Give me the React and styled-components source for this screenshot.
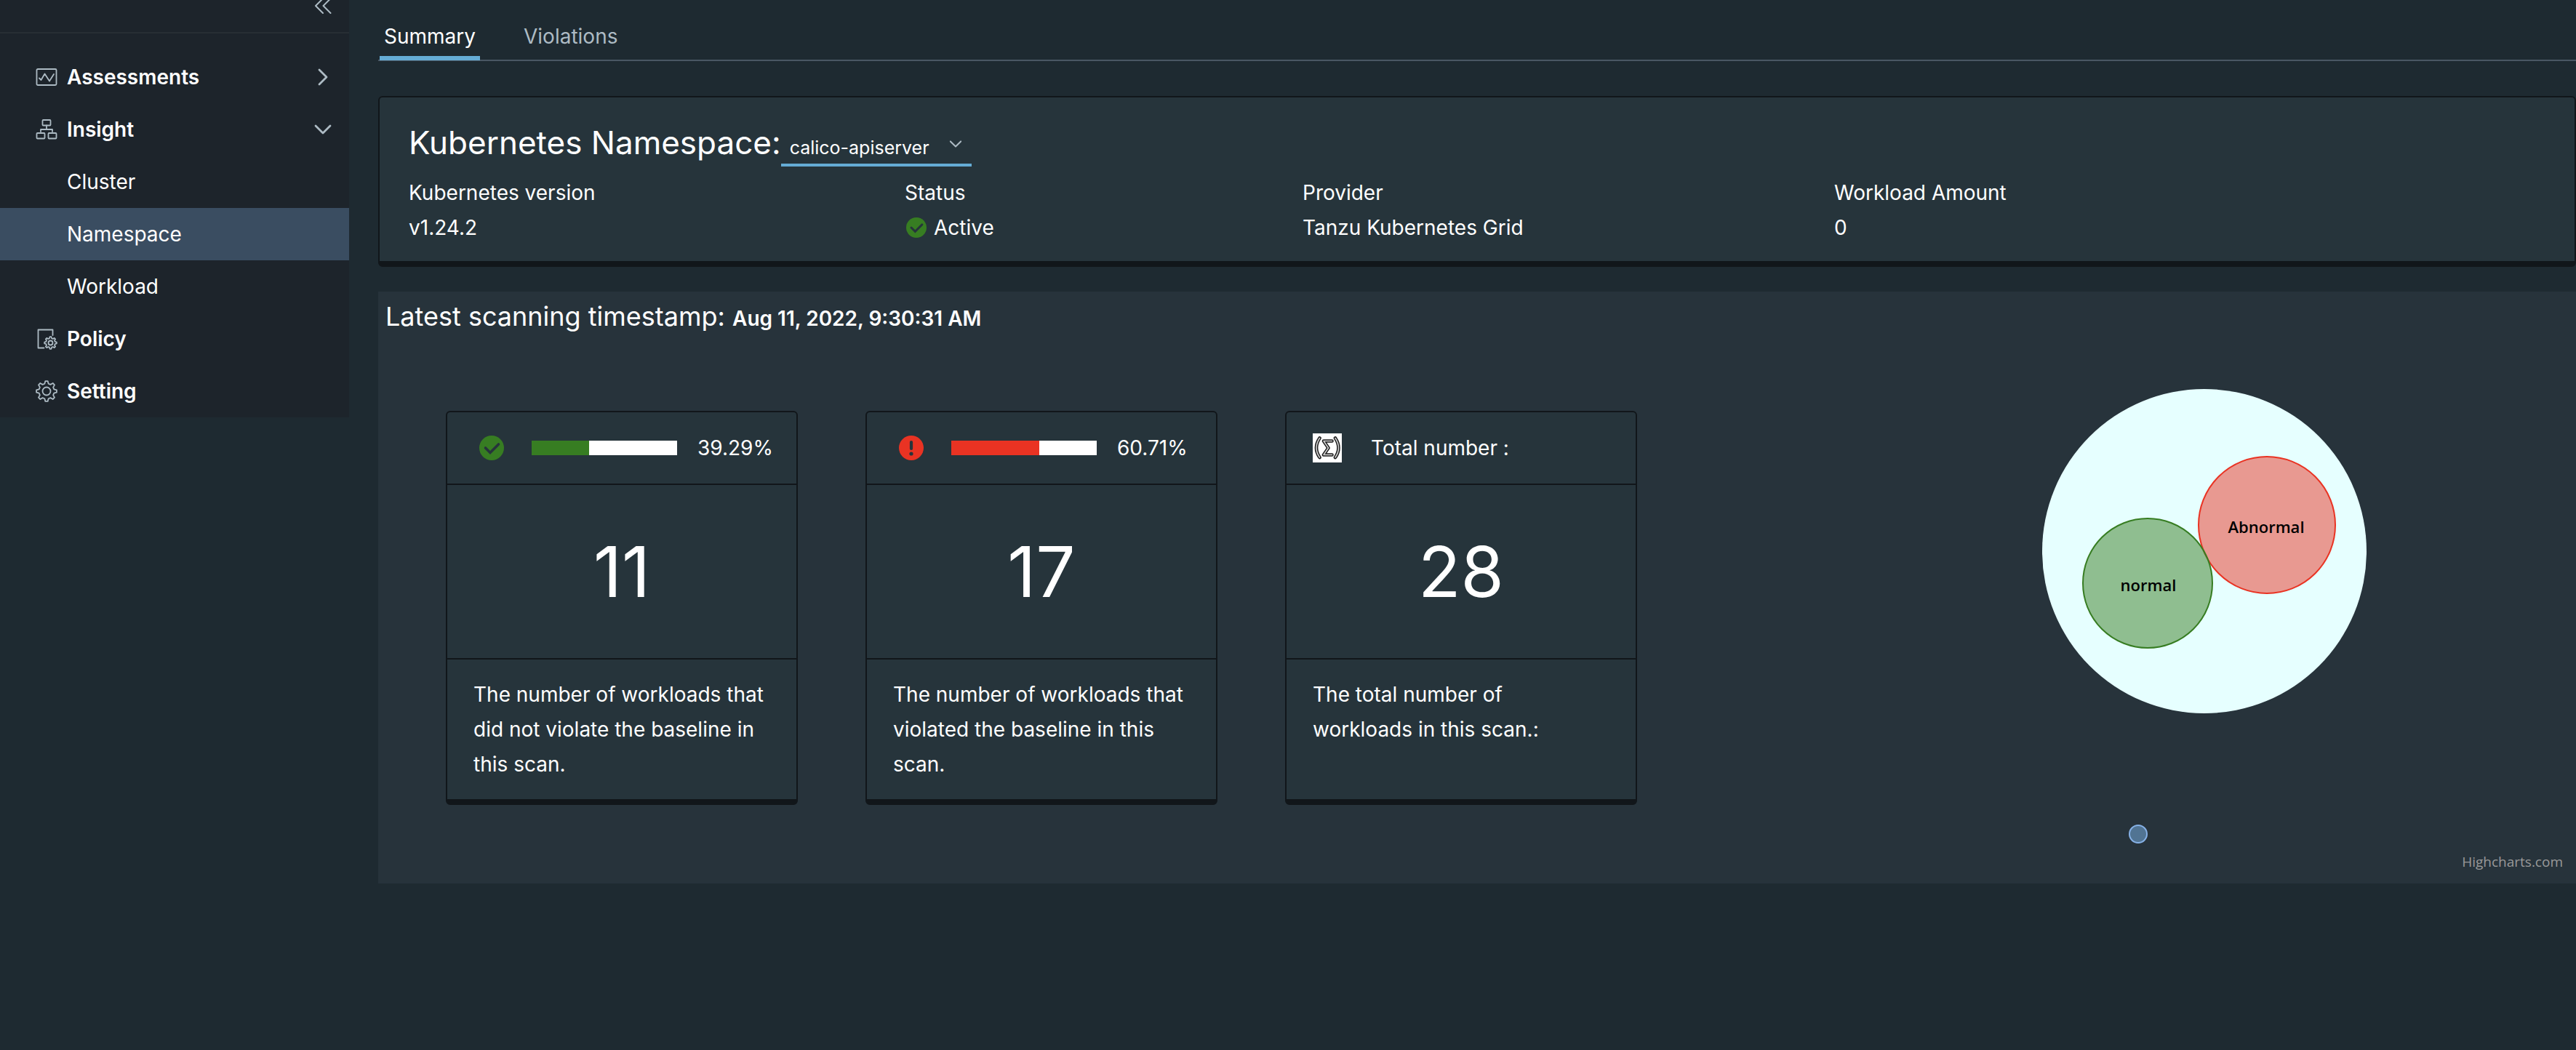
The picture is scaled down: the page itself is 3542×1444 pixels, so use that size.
import React from "react";
import styled, { createGlobalStyle } from "styled-components";

const color = {
  page: "#1e2a31",
  side: "#1d242b",
  sideLine: "#272e34",
  selected: "#3a4d61",
  card: "#26343b",
  panel: "#27333b",
  edge: "#11161a",
  accent: "#65acd5",
  muted: "#adbbc4",
  rule: "#4a5763",
  good: "#377d22",
  bad: "#e93323",
};

const GlobalStyle = createGlobalStyle`
  *, *::before, *::after { box-sizing: border-box; }
  body {
    margin: 0;
    background: ${color.page};
    color: #fff;
    font-family: Inter, "Open Sans", sans-serif;
    font-size: 28px;
    line-height: 48px;
  }
  h1, h2, p, ul, dl, dd { margin: 0; padding: 0; font-weight: 400; }
  ul { list-style: none; }
  a { color: inherit; text-decoration: none; }
  button, select { font: inherit; color: inherit; background: none; border: 0; padding: 0; border-radius: 0; }
  svg { display: block; flex: none; }
`;

const Shell = styled.div`
  display: flex;
  align-items: flex-start;
  min-height: 100vh;
`;

const SideNav = styled.nav`
  flex: 0 0 480px;
  background: ${color.side};
`;

const CollapseBar = styled.div`
  display: flex;
  justify-content: flex-end;
  height: 46px;
  padding-right: 22px;
  margin-bottom: 24px;
  border-bottom: 2px solid ${color.sideLine};
`;

const CollapseButton = styled.button`
  height: 20px;
  color: ${color.muted};
`;

const NavLink = styled.a`
  display: flex;
  align-items: center;
  height: 72px;
  padding: 0 22px 0 ${(p) => (p.$child ? "92px" : "48px")};
  font-weight: ${(p) => (p.$child ? 400 : 600)};
  background: ${(p) => (p.$selected ? color.selected : "transparent")};
  svg { color: ${color.muted}; }
`;

const NavText = styled.span`
  flex: 1;
  padding-left: ${(p) => (p.$indent ? "12px" : "0")};
`;

const Main = styled.main`
  flex: 1;
  min-width: 0;
  padding-left: 40px;
`;

const TabBar = styled.div`
  display: flex;
  gap: 54px;
  height: 84px;
  border-bottom: 2px solid ${color.rule};
  padding-left: 2px;
`;

const Tab = styled.button`
  height: 83px;
  padding: 22px 6px 0;
  color: ${(p) => (p.$active ? "#fff" : color.muted)};
  border-bottom: 6px solid ${(p) => (p.$active ? color.accent : "transparent")};
`;

const InfoCard = styled.section`
  margin-top: 48px;
  padding: 32px 40px 22px;
  background: ${color.card};
  border: 2px solid ${color.edge};
  border-bottom-width: 8px;
  border-radius: 6px;
`;

const TitleRow = styled.div`
  display: flex;
  align-items: baseline;
`;

const Title = styled.h1`
  font-size: 44px;
  line-height: 60px;
`;

const Picker = styled.label`
  display: grid;
  align-items: center;
  width: 262px;
  border-bottom: 4px solid ${color.accent};
  select {
    grid-area: 1 / 1;
    appearance: none;
    padding: 0 50px 0 12px;
    height: 44px;
    font-size: 25px;
    line-height: 44px;
  }
  svg {
    grid-area: 1 / 1;
    justify-self: end;
    margin: 0 12px 10px 0;
    pointer-events: none;
    color: ${color.muted};
  }
`;

const Facts = styled.dl`
  display: grid;
  grid-template-columns: 682fr 547fr 731fr 978fr;
  padding-top: 12px;
`;

const FactValue = styled.dd`
  display: flex;
  align-items: center;
  gap: 10px;
  svg { margin-left: 2px; }
`;

const ScanPanel = styled.section`
  margin-top: 34px;
  padding-left: 10px;
  background: ${color.panel};
`;

const ScanTitle = styled.h2`
  padding-top: 10px;
  font-size: 36px;
  line-height: 48px;
  strong { font-size: 28px; line-height: 28px; font-weight: 600; }
`;

const ScanBody = styled.div`
  display: flex;
  align-items: flex-start;
  padding-left: 83px;
`;

const Cards = styled.div`
  display: flex;
  gap: 93px;
  padding: 106px 0 108px;
`;

const StatCard = styled.article`
  width: 484px;
  background: ${color.card};
  border: 2px solid ${color.edge};
  border-bottom-width: 8px;
  border-radius: 6px;
`;

const CardHead = styled.header`
  display: flex;
  align-items: center;
  height: 100px;
  padding: 0 28px 0 36px;
  border-bottom: 2px solid ${color.edge};
  white-space: nowrap;
`;

const IconSlot = styled.span`
  flex: none;
  width: 80px;
  padding-left: ${(p) => (p.$flush ? "0" : "8px")};
`;

const Meter = styled.div`
  flex: none;
  width: 200px;
  height: 20px;
  margin-right: 28px;
  background: #fff;
`;

const MeterFill = styled.div`
  height: 100%;
  background: ${(p) => p.$color};
`;

const Figure = styled.p`
  padding: 70px 0;
  border-bottom: 2px solid ${color.edge};
  font-size: 96px;
  line-height: 98px;
  text-align: center;
`;

const CardText = styled.p`
  min-height: 192px;
  padding: 24px 40px 24px 36px;
`;

const Chart = styled.div`
  flex: 1;
  display: flex;
  flex-direction: column;
  align-items: center;
  margin-left: 268px;
  padding: 62px 0 10px;
`;

const Credits = styled.a`
  align-self: flex-end;
  margin: 12px 18px 0 0;
  font-family: "Open Sans", sans-serif;
  font-size: 19px;
  line-height: 24px;
  color: #999;
`;

const stroke = { fill: "none", stroke: "currentColor", strokeLinecap: "round", strokeLinejoin: "round" };

function gearPath(cx, cy, outer, inner, teeth) {
  const pts = [];
  const step = (Math.PI * 2) / teeth;
  for (let i = 0; i < teeth; i++) {
    const a = i * step - Math.PI / 2;
    [[-0.32, inner], [-0.15, outer], [0.15, outer], [0.32, inner]].forEach(([t, r]) => {
      pts.push(`${(cx + r * Math.cos(a + t * step)).toFixed(2)} ${(cy + r * Math.sin(a + t * step)).toFixed(2)}`);
    });
  }
  return `M${pts.join("L")}Z`;
}

const ChartLineIcon = () => (
  <svg width="32" height="32" viewBox="0 0 32 32" {...stroke} strokeWidth="1.8" aria-hidden="true">
    <rect x="2.500" y="5" width="27" height="22" rx="1.5" />
    <path d="M6 17.500L8.500 20l5-8.500 6.500 10 6-9.500" />
  </svg>
);

const TreeIcon = () => (
  <svg width="32" height="32" viewBox="0 0 32 32" {...stroke} strokeWidth="1.8" aria-hidden="true">
    <rect x="10.500" y="3" width="11" height="7.500" rx="1" />
    <rect x="2.500" y="21" width="11" height="7.500" rx="1" />
    <rect x="18.500" y="21" width="11" height="7.500" rx="1" />
    <path d="M16 10.500v5.500M8 19v-3h16v3" />
  </svg>
);

const PolicyIcon = () => (
  <svg width="32" height="32" viewBox="0 0 32 32" {...stroke} strokeWidth="1.8" aria-hidden="true">
    <path d="M24.500 11V3.500H4.500v25h8" />
    <path d={gearPath(21.5, 21.5, 8.4, 6.4, 8)} />
    <circle cx="21.500" cy="21.500" r="3" />
  </svg>
);

const GearIcon = () => (
  <svg width="32" height="32" viewBox="0 0 32 32" {...stroke} strokeWidth="1.8" aria-hidden="true">
    <path d={gearPath(16, 16, 14, 10.6, 8)} />
    <circle cx="16" cy="16" r="5.500" />
  </svg>
);

const Chevron = ({ down, size = 28 }) => (
  <svg width={size} height={size} viewBox="0 0 28 28" {...stroke} strokeWidth="2.800" aria-hidden="true">
    <path d={down ? "M4 9l10 10L24 9" : "M9 4l10 10L9 24"} />
  </svg>
);

const DoubleChevron = () => (
  <svg width="28" height="20" viewBox="0 0 28 20" {...stroke} strokeWidth="2" aria-hidden="true">
    <path d="M14 -2L4 8l10 10M24.500 -2L14.500 8l10 10" />
  </svg>
);

const CheckIcon = ({ size }) => (
  <svg width={size} height={size} viewBox="0 0 34 34" aria-hidden="true">
    <circle cx="17" cy="17" r="17" fill={color.good} />
    <path d="M8.500 17l6.500 6.500L26.500 12" fill="none" stroke={color.card} strokeWidth="3.600" strokeLinecap="round" />
  </svg>
);

const AlertIcon = () => (
  <svg width="34" height="34" viewBox="0 0 34 34" aria-hidden="true">
    <circle cx="17" cy="17" r="17" fill={color.bad} />
    <path d="M17 9v9" stroke={color.card} strokeWidth="4.200" strokeLinecap="round" />
    <circle cx="17" cy="25" r="2.600" fill={color.card} />
  </svg>
);

const sigmaLines = "M9.500 6.500Q0.500 20 9.500 33M31 6.500Q40 20 31 33M26.500 10.500H15L21.500 20L15 29.500H26.500";

const SigmaIcon = () => (
  <svg width="40" height="40" viewBox="0 0 40 40" fill="none" strokeLinecap="round" strokeLinejoin="round" aria-hidden="true">
    <rect width="40" height="40" fill="#fff" />
    <path d={sigmaLines} stroke="#1c1c1c" strokeWidth="4.600" />
    <path d={sigmaLines} stroke="#d0d0d0" strokeWidth="1.600" />
  </svg>
);

const NAV = [
  { label: "Assessments", icon: <ChartLineIcon />, arrow: "right" },
  { label: "Insight", icon: <TreeIcon />, arrow: "down" },
  { label: "Cluster", child: true },
  { label: "Namespace", child: true, selected: true },
  { label: "Workload", child: true },
  { label: "Policy", icon: <PolicyIcon /> },
  { label: "Setting", icon: <GearIcon /> },
];

const FACTS = [
  { name: "Kubernetes version", value: "v1.24.2" },
  { name: "Status", value: "Active", ok: true },
  { name: "Provider", value: "Tanzu Kubernetes Grid" },
  { name: "Workload Amount", value: "0" },
];

function RatioCard({ icon, percent, fill, count, children }) {
  return (
    <StatCard>
      <CardHead>
        <IconSlot>{icon}</IconSlot>
        <Meter role="img" aria-label={`${percent}%`}>
          <MeterFill $color={fill} style={{ width: `${percent}%` }} />
        </Meter>
        {percent}%
      </CardHead>
      <Figure>{count}</Figure>
      <CardText>{children}</CardText>
    </StatCard>
  );
}

const BubbleLabel = styled.text`
  font-family: "Open Sans", sans-serif;
  font-size: 22px;
  font-weight: 600;
  text-anchor: middle;
`;

function BubbleChart() {
  return (
    <svg width="480" height="640" viewBox="0 0 480 640" role="img" aria-label="Workloads by state">
      <circle cx="240" cy="237" r="223" fill="#e6ffff" />
      <circle cx="326" cy="201" r="94" fill={color.bad} fillOpacity="0.5" stroke={color.bad} strokeWidth="2" />
      <circle cx="162" cy="281" r="89" fill={color.good} fillOpacity="0.5" stroke={color.good} strokeWidth="2" />
      <circle cx="149" cy="626" r="12" fill="#7cb5ec" fillOpacity="0.500" stroke="#86b1e6" strokeWidth="2" />
      <BubbleLabel x="325" y="212">Abnormal</BubbleLabel>
      <BubbleLabel x="163" y="292">normal</BubbleLabel>
    </svg>
  );
}

export default function App() {
  return (
    <>
      <GlobalStyle />
      <Shell>
        <SideNav>
          <CollapseBar>
            <CollapseButton aria-label="Collapse navigation"><DoubleChevron /></CollapseButton>
          </CollapseBar>
          <ul>
            {NAV.map((n) => (
              <li key={n.label}>
                <NavLink href="#" $child={n.child} $selected={n.selected}>
                  {n.icon}
                  <NavText $indent={!n.child}>{n.label}</NavText>
                  {n.arrow && <Chevron down={n.arrow === "down"} />}
                </NavLink>
              </li>
            ))}
          </ul>
        </SideNav>
        <Main>
          <TabBar role="tablist">
            <Tab role="tab" aria-selected="true" $active>Summary</Tab>
            <Tab role="tab" aria-selected="false">Violations</Tab>
          </TabBar>
          <InfoCard>
            <TitleRow>
              <Title>Kubernetes Namespace:</Title>
              <Picker>
                <select aria-label="Kubernetes Namespace" defaultValue="calico-apiserver">
                  <option>calico-apiserver</option>
                </select>
                <Chevron down size={20} />
              </Picker>
            </TitleRow>
            <Facts>
              {FACTS.map((f) => (
                <div key={f.name}>
                  <dt>{f.name}</dt>
                  <FactValue>
                    {f.ok && <CheckIcon size={28} />}
                    {f.value}
                  </FactValue>
                </div>
              ))}
            </Facts>
          </InfoCard>
          <ScanPanel>
            <ScanTitle>
              Latest scanning timestamp: <strong>Aug 11, 2022, 9:30:31 AM</strong>
            </ScanTitle>
            <ScanBody>
              <Cards>
                <RatioCard icon={<CheckIcon size={34} />} percent={39.29} fill={color.good} count={11}>
                  The number of workloads that did not violate the baseline in this scan.
                </RatioCard>
                <RatioCard icon={<AlertIcon />} percent={60.71} fill={color.bad} count={17}>
                  The number of workloads that violated the baseline in this scan.
                </RatioCard>
                <StatCard>
                  <CardHead>
                    <IconSlot $flush><SigmaIcon /></IconSlot>
                    Total number :
                  </CardHead>
                  <Figure>28</Figure>
                  <CardText>The total number of workloads in this scan.:</CardText>
                </StatCard>
              </Cards>
              <Chart>
                <BubbleChart />
                <Credits href="#">Highcharts.com</Credits>
              </Chart>
            </ScanBody>
          </ScanPanel>
        </Main>
      </Shell>
    </>
  );
}
